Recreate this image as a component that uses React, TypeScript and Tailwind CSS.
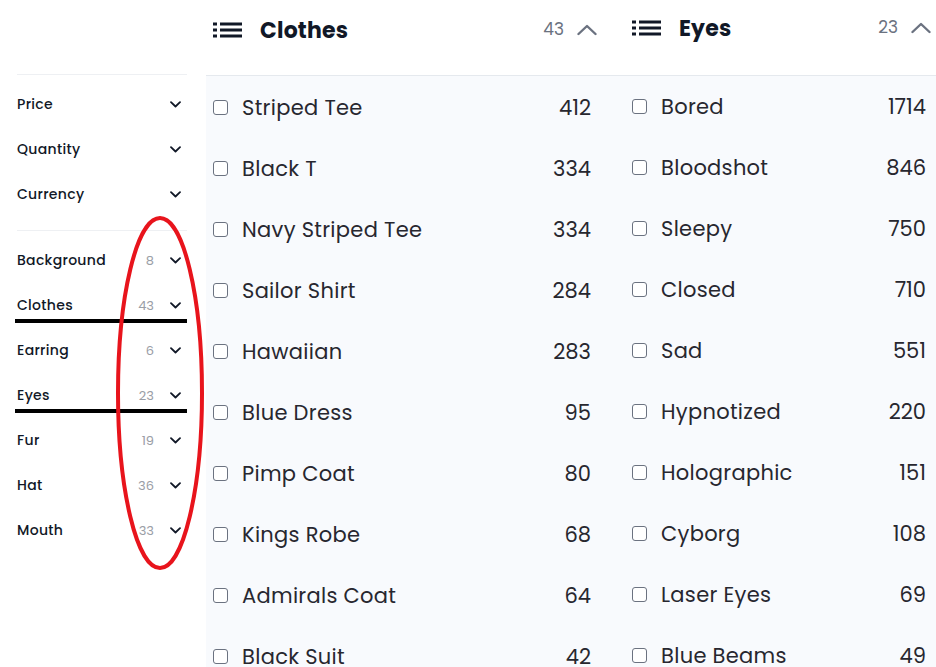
import React from "react";

const clothes: [string, number][] = [
  ["Striped Tee", 412],
  ["Black T", 334],
  ["Navy Striped Tee", 334],
  ["Sailor Shirt", 284],
  ["Hawaiian", 283],
  ["Blue Dress", 95],
  ["Pimp Coat", 80],
  ["Kings Robe", 68],
  ["Admirals Coat", 64],
  ["Black Suit", 42],
];

const eyes: [string, number][] = [
  ["Bored", 1714],
  ["Bloodshot", 846],
  ["Sleepy", 750],
  ["Closed", 710],
  ["Sad", 551],
  ["Hypnotized", 220],
  ["Holographic", 151],
  ["Cyborg", 108],
  ["Laser Eyes", 69],
  ["Blue Beams", 49],
];

const traits: [string, number][] = [
  ["Background", 8],
  ["Clothes", 43],
  ["Earring", 6],
  ["Eyes", 23],
  ["Fur", 19],
  ["Hat", 36],
  ["Mouth", 33],
];

function ChevronDown() {
  return (
    <svg width="11" height="7" viewBox="0 0 11 7" fill="none" className="shrink-0">
      <path d="M1 1.2 L5.5 5.5 L10 1.2" stroke="#111827" strokeWidth="1.8" strokeLinecap="round" strokeLinejoin="round" />
    </svg>
  );
}

function ChevronUp() {
  return (
    <svg width="20" height="12" viewBox="0 0 20 12" fill="none" className="shrink-0">
      <path d="M1.5 10 L10 2 L18.5 10" stroke="#6b7280" strokeWidth="2.4" strokeLinecap="round" strokeLinejoin="round" />
    </svg>
  );
}

function ListIcon() {
  return (
    <svg width="29" height="16" viewBox="0 0 29 16" fill="#111827" className="shrink-0">
      <rect x="0" y="0.5" width="4" height="3" />
      <rect x="7" y="0.5" width="22" height="3" />
      <rect x="0" y="6.5" width="4" height="3" />
      <rect x="7" y="6.5" width="22" height="3" />
      <rect x="0" y="12.5" width="4" height="3" />
      <rect x="7" y="12.5" width="22" height="3" />
    </svg>
  );
}

function Box() {
  return <span className="block w-[15px] h-[15px] shrink-0 rounded-[3px] border-[1.5px] border-[#6b7280] bg-white" />;
}

function Column({
  title,
  count,
  items,
  width,
  headerPt,
  bodyPt,
  rowPr,
}: {
  title: string;
  count: number;
  items: [string, number][];
  width: string;
  headerPt: string;
  bodyPt: string;
  rowPr: string;
}) {
  return (
    <div className={`${width} shrink-0 flex flex-col`}>
      <div className={`h-[75px] flex items-start ${headerPt} pl-[7px] pr-[4px]`}>
        <div className="flex items-center w-full h-[28px]">
          <ListIcon />
          <span className="ml-[18px] text-[22px] font-bold text-[#111827] tracking-[0.2px]">{title}</span>
          <span className="ml-auto text-[17px] text-[#6b7280]">{count}</span>
          <span className="ml-[13px]">
            <ChevronUp />
          </span>
        </div>
      </div>
      <div className={`flex flex-col ${bodyPt} pl-[7px] ${rowPr}`}>
        {items.map(([name, n]) => (
          <div key={name} className="h-[61px] flex items-center">
            <Box />
            <span className="ml-[14px] text-[21px] tracking-[0.3px] text-[#27272f]">{name}</span>
            <span className="ml-auto text-[21px] text-[#27272f]">{n}</span>
          </div>
        ))}
      </div>
    </div>
  );
}

export default function App() {
  return (
    <div
      className="relative w-[936px] h-[667px] overflow-hidden bg-white flex"
      style={{ fontFamily: "Poppins, Inter, 'Noto Sans', sans-serif" }}
    >
      {/* Sidebar */}
      <div className="relative w-[206px] shrink-0 flex flex-col pl-[17px] pr-[19px]">
        <div className="h-[75px] border-b border-[#eef0f3] shrink-0" />
        <div className="flex flex-col pt-[7px] pb-[13px] border-b border-[#eef0f3]">
          {["Price", "Quantity", "Currency"].map((t) => (
            <div key={t} className="h-[45px] flex items-center pr-[6px]">
              <span className="text-[14px] font-medium tracking-[0.3px] text-[#111827]">{t}</span>
              <span className="ml-auto">
                <ChevronDown />
              </span>
            </div>
          ))}
        </div>
        <div className="flex flex-col pt-[7px]">
          {traits.map(([t, n]) => (
            <div key={t} className="h-[45px] flex items-center pr-[6px]">
              <span className="text-[14px] font-medium tracking-[0.3px] text-[#111827]">{t}</span>
              <span className="ml-auto text-[13px] text-[#9a9ea6]">{n}</span>
              <span className="ml-[16px]">
                <ChevronDown />
              </span>
            </div>
          ))}
        </div>
        {/* annotation underlines */}
        <div className="absolute left-[15px] top-[319px] w-[172px] h-[4px] bg-black" />
        <div className="absolute left-[15px] top-[409px] w-[172px] h-[4px] bg-black" />
      </div>

      {/* Main */}
      <div className="flex-1 flex flex-col">
        <div className="flex-1 flex relative">
          <div className="absolute left-0 right-0 top-[75px] bottom-0 bg-[#f8fafd] border-t border-[#e5e9ee]" />
          <div className="relative flex gap-[24px]">
            <Column title="Clothes" count={43} items={clothes} width="w-[395px]" headerPt="pt-[16px]" bodyPt="pt-[2px]" rowPr="pr-[10px]" />
            <Column title="Eyes" count={23} items={eyes} width="w-[310px]" headerPt="pt-[14px]" bodyPt="pt-[1px]" rowPr="pr-[9px]" />
          </div>
        </div>
      </div>

      {/* red annotation ellipse */}
      <svg className="absolute left-0 top-0 pointer-events-none" width="936" height="667">
        <ellipse cx="160" cy="393" rx="42" ry="175" fill="none" stroke="#e8141c" strokeWidth="4" />
      </svg>
    </div>
  );
}
